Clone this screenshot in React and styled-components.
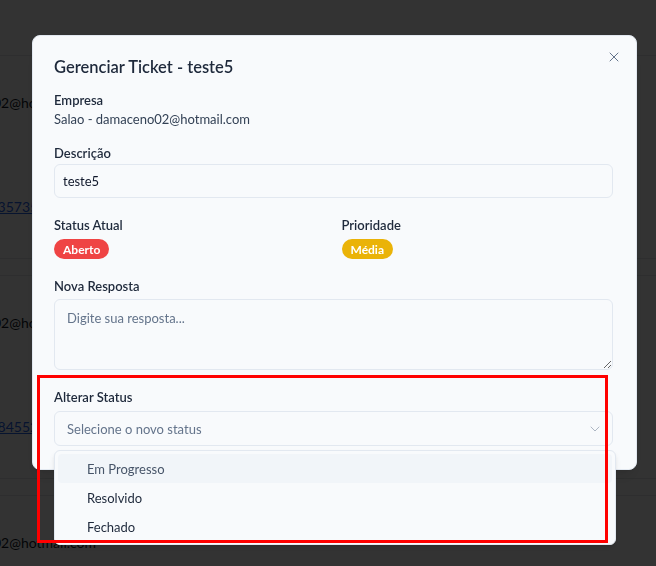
import styled, { createGlobalStyle } from "styled-components";
import { X, ChevronDown } from "lucide-react";

const GlobalStyle = createGlobalStyle`
  * { box-sizing: border-box; }
  html, body { margin: 0; padding: 0; }
  body {
    font-family: Lato, "Liberation Sans", sans-serif;
    background: #ffffff;
    color: #0f172a;
    overflow: hidden;
  }
`;

const tickets = [
  { email: "damaceno02@hotmail.com", phone: "1198435735012" },
  { email: "damaceno02@hotmail.com", phone: "1199884552011" },
  { email: "damaceno02@hotmail.com", phone: "1197712345678" },
];

const Page = styled.div`
  height: 566px;
  overflow: hidden;
  background: #ffffff;
`;

const PageHeader = styled.div`
  height: 55px;
`;

const TicketList = styled.div`
  display: flex;
  flex-direction: column;
  gap: 16px;
`;

const TicketRow = styled.div`
  display: flex;
  flex-direction: column;
  gap: 84px;
  padding: 37px 0 41px;
  border-top: 1px solid #e5e7eb;
  border-bottom: 1px solid #e5e7eb;
`;

const Cell = styled.span`
  display: block;
  margin-left: ${({ $shift }) => $shift}px;
  font-size: 14px;
  line-height: 20px;
  white-space: nowrap;
  color: ${({ $link }) => ($link ? "#2563eb" : "#111827")};
  text-decoration: ${({ $link }) => ($link ? "underline" : "none")};
`;

const Overlay = styled.div`
  position: fixed;
  inset: 0;
  background: rgba(0, 0, 0, 0.8);
`;

const Dialog = styled.div`
  position: fixed;
  left: 32px;
  top: 35px;
  width: 605px;
  background: #f8fafc;
  border: 1px solid #e2e8f0;
  border-radius: 8px;
  padding: 21px 23px 23px 21px;
  box-shadow: 0 10px 15px -3px rgba(0, 0, 0, 0.1), 0 4px 6px -4px rgba(0, 0, 0, 0.1);
  z-index: 50;
`;

const CloseButton = styled.button`
  position: absolute;
  top: 13px;
  right: 14px;
  width: 16px;
  height: 16px;
  padding: 0;
  border: 0;
  background: none;
  color: #64748b;
  display: flex;
  align-items: center;
  justify-content: center;
  cursor: pointer;
`;

const Title = styled.h2`
  margin: 0;
  font-size: 16.5px;
  line-height: 20px;
  font-weight: 600;
  color: #1e293b;
`;

const Section = styled.div`
  margin-top: ${({ $mt }) => $mt}px;
  display: flex;
  flex-direction: column;
  position: relative;
`;

const Label = styled.label`
  display: block;
  font-size: 13px;
  line-height: 14px;
  font-weight: 600;
  color: #1e293b;
  margin-bottom: ${({ $gap }) => $gap}px;
`;

const Value = styled.p`
  margin: 0;
  font-size: 13px;
  line-height: 20px;
  color: #334155;
`;

const Input = styled.input`
  height: 34px;
  width: 100%;
  padding: 0 8px;
  border: 1px solid #e2e8f0;
  border-radius: 6px;
  background: #f8fafc;
  font-family: inherit;
  font-size: 13px;
  color: #0f172a;
  outline: none;
`;

const TextArea = styled.textarea`
  height: 71px;
  width: 100%;
  padding: 8px 12px;
  border: 1px solid #e2e8f0;
  border-radius: 6px;
  background: #f8fafc;
  font-family: inherit;
  font-size: 13px;
  line-height: 20px;
  color: #0f172a;
  outline: none;
  resize: vertical;

  &::placeholder {
    color: #64748b;
  }
`;

const InfoGrid = styled.div`
  display: grid;
  grid-template-columns: 1fr 1fr;
  gap: 16px;
  margin-top: 20px;
`;

const Badge = styled.span`
  align-self: flex-start;
  display: inline-flex;
  align-items: center;
  height: 20px;
  padding: 0 9px;
  border-radius: 999px;
  background: ${({ $tone }) => $tone};
  color: #ffffff;
  font-size: 12px;
  font-weight: 700;
`;

const SelectTrigger = styled.button`
  height: 35px;
  width: 100%;
  display: flex;
  align-items: center;
  justify-content: space-between;
  padding: 0 9px 0 12px;
  border: 1px solid #e2e8f0;
  border-radius: 6px;
  background: #f8fafc;
  font-family: inherit;
  font-size: 13px;
  color: #64748b;
  cursor: pointer;

  svg {
    opacity: 0.5;
  }
`;

const Menu = styled.div`
  position: absolute;
  top: calc(100% + 4px);
  left: 0;
  width: 562px;
  padding: 3px;
  background: #f8fafc;
  border: 1px solid #e2e8f0;
  border-radius: 6px;
  box-shadow: 0 4px 6px -1px rgba(0, 0, 0, 0.1), 0 2px 4px -2px rgba(0, 0, 0, 0.1);
  z-index: 60;
`;

const Option = styled.div`
  height: 29px;
  display: flex;
  align-items: center;
  padding-left: 29px;
  border-radius: 4px;
  font-size: 13px;
  color: ${({ $active }) => ($active ? "#475569" : "#1e293b")};
  background: ${({ $active }) => ($active ? "#f1f5f9" : "transparent")};
`;

const Highlight = styled.div`
  position: fixed;
  left: 37px;
  top: 375px;
  width: 571px;
  height: 168px;
  border: 3px solid #ff0000;
  pointer-events: none;
  z-index: 100;
`;

const options = ["Em Progresso", "Resolvido", "Fechado"];

export default function App() {
  return (
    <>
      <GlobalStyle />
      <Page>
        <PageHeader />
        <TicketList>
          {tickets.map((t, i) => (
            <TicketRow key={i}>
              <Cell $shift={-70}>{t.email}</Cell>
              <Cell $link $shift={-43}>{t.phone}</Cell>
            </TicketRow>
          ))}
        </TicketList>
      </Page>

      <Overlay />

      <Dialog>
        <CloseButton aria-label="Fechar">
          <X size={16} strokeWidth={1.5} />
        </CloseButton>
        <Title>Gerenciar Ticket - teste5</Title>

        <Section $mt={16}>
          <Label $gap={2}>Empresa</Label>
          <Value>Salao - damaceno02@hotmail.com</Value>
        </Section>

        <Section $mt={17}>
          <Label $gap={4}>Descrição</Label>
          <Input defaultValue="teste5" />
        </Section>

        <InfoGrid>
          <Section $mt={0}>
            <Label $gap={7}>Status Atual</Label>
            <Badge $tone="#ef4444">Aberto</Badge>
          </Section>
          <Section $mt={0}>
            <Label $gap={7}>Prioridade</Label>
            <Badge $tone="#eab308">Média</Badge>
          </Section>
        </InfoGrid>

        <Section $mt={20}>
          <Label $gap={6}>Nova Resposta</Label>
          <TextArea placeholder="Digite sua resposta..." />
        </Section>

        <Section $mt={20}>
          <Label $gap={7}>Alterar Status</Label>
          <SelectTrigger>
            <span>Selecione o novo status</span>
            <ChevronDown size={16} strokeWidth={1.5} />
          </SelectTrigger>
          <Menu>
            {options.map((o, i) => (
              <Option key={o} $active={i === 0}>
                {o}
              </Option>
            ))}
          </Menu>
        </Section>
      </Dialog>

      <Highlight />
    </>
  );
}
